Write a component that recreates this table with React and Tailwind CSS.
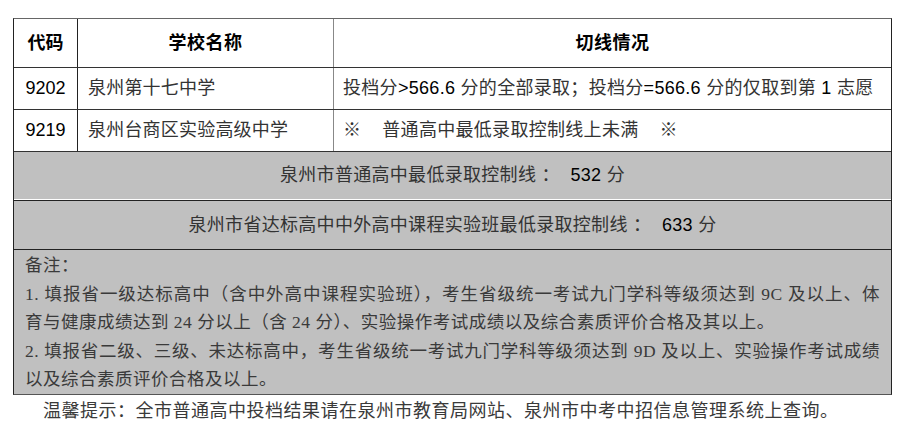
import React from 'react';

const sans = { fontFamily: '"Liberation Sans", "Noto Sans CJK SC", sans-serif' };
const serif = { fontFamily: '"Liberation Serif", "Noto Sans CJK SC", serif' };

const schools = [
  {
    code: '9202',
    name: '泉州第十七中学',
    note: '投档分>566.6 分的全部录取；投档分=566.6 分的仅取到第 1 志愿',
  },
  {
    code: '9219',
    name: '泉州台商区实验高级中学',
    note: null,
  },
];

export default function App() {
  return (
    <div className="min-h-screen bg-white pt-[18px] text-[#333]" style={sans}>
      <div className="ml-[13px] w-[879px] border border-[#222] border-t-[#666] border-b-[#555]">
        {/* 表头 */}
        <div className="flex h-[49px] border-b border-[#333] text-[18px] font-bold text-black">
          <div className="flex w-[64px] items-center justify-center border-r border-[#222]">代码</div>
          <div className="flex w-[256px] items-center justify-center border-r border-[#888] tracking-[0.5px]">学校名称</div>
          <div className="flex flex-1 items-center justify-center tracking-[0.5px]">切线情况</div>
        </div>

        {schools.map((s) => (
          <div key={s.code} className="flex h-[42px] border-b border-[#333] text-[18px]">
            <div className="flex w-[64px] items-center justify-center border-r border-[#222] text-black">{s.code}</div>
            <div className="flex w-[256px] items-center border-r border-[#888] pl-[10px] tracking-[0.2px]">{s.name}</div>
            <div className="flex flex-1 items-center pl-[9px] whitespace-pre tracking-[0.3px]">
              {s.note ? (
                <span>
                  投档分<span className="text-black">&gt;566.6</span> 分的全部录取；投档分<span className="text-black">=566.6</span> 分的仅取到第 <span className="text-black">1</span> 志愿
                </span>
              ) : (
                <span>
                  <span className="mr-[21px]">※</span>普通高中最低录取控制线上未满<span className="ml-[21px]">※</span>
                </span>
              )}
            </div>
          </div>
        ))}

        {/* 控制线 */}
        <div className="flex h-[48px] items-center justify-center border-b border-white bg-[#c0c0c0] text-[18px] whitespace-pre tracking-[0.3px]">
          泉州市普通高中最低录取控制线 ：  <span className="text-black">532</span> 分
        </div>
        <div className="flex h-[50px] items-center justify-center border-y border-[#222] bg-[#c0c0c0] text-[18px] whitespace-pre tracking-[0.3px]">
          泉州市省达标高中中外高中课程实验班最低录取控制线 ：  <span className="text-black">633</span> 分
        </div>

        {/* 备注 */}
        <div className="h-[144px] bg-[#c0c0c0] px-[11px] pt-[1px] text-[17.5px] leading-[28.5px] tracking-[0.5px] text-[#3a3a3a]" style={serif}>
          <div>备注：</div>
          <div className="[text-align-last:justify]">1. 填报省一级达标高中（含中外高中课程实验班），考生省级统一考试九门学科等级须达到 9C 及以上、体</div>
          <div>育与健康成绩达到 24 分以上（含 24 分）、实验操作考试成绩以及综合素质评价合格及其以上。</div>
          <div className="[text-align-last:justify]">2. 填报省二级、三级、未达标高中，考生省级统一考试九门学科等级须达到 9D 及以上、实验操作考试成绩</div>
          <div>以及综合素质评价合格及以上。</div>
        </div>
      </div>

      <p className="ml-[43px] mt-[2px] text-[18px] leading-[28px] tracking-[0.5px] text-[#3a3a3a]" style={serif}>
        温馨提示：全市普通高中投档结果请在泉州市教育局网站、泉州市中考中招信息管理系统上查询。
      </p>
    </div>
  );
}
